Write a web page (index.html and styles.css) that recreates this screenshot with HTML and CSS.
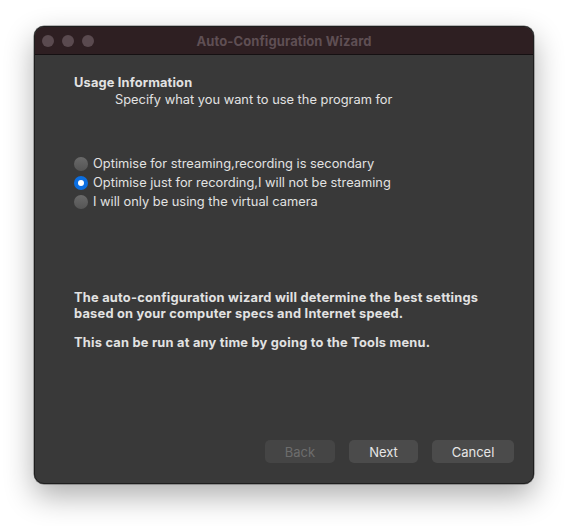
FILE: index.html
```html
<!DOCTYPE html>
<html>
<head>
<meta charset="utf-8">
<link rel="stylesheet" href="styles.css">
</head>
<body>
<div class="window">
  <div class="titlebar">
    <div class="lights"><span></span><span></span><span></span></div>
    <div class="title">Auto-Configuration Wizard</div>
  </div>
  <div class="content">
    <div class="heading">Usage Information</div>
    <div class="subheading">Specify what you want to use the program for</div>
    <div class="options">
      <label class="option"><span class="radio"></span>Optimise for streaming,recording is secondary</label>
      <label class="option"><span class="radio checked"></span>Optimise just for recording,I will not be streaming</label>
      <label class="option"><span class="radio"></span>I will only be using the virtual camera</label>
    </div>
    <p class="info first">The auto-configuration wizard will determine the best settings<br>based on your computer specs and Internet speed.</p>
    <p class="info second">This can be run at any time by going to the Tools menu.</p>
    <div class="buttons">
      <button class="btn back">Back</button>
      <button class="btn next">Next</button>
      <button class="btn cancel">Cancel</button>
    </div>
  </div>
</div>
</body>
</html>
```

FILE: styles.css
```css
html, body {
  margin: 0;
  padding: 0;
  background: #ffffff;
  min-height: 100vh;
}
body {
  font-family: "Inter", "Liberation Sans", sans-serif;
  font-size: 12.85px;
  padding: 26px 0 0 34px;
  box-sizing: border-box;
}
.window {
  width: 500px;
  height: 458px;
  box-sizing: border-box;
  border-radius: 10px;
  background: #393939;
  border: 1px solid #1e1e1e;
  box-shadow: 0 12px 30px rgba(0,0,0,0.32), 0 0 0 0.5px rgba(0,0,0,0.5);
  overflow: hidden;
  display: flex;
  flex-direction: column;
}
.titlebar {
  height: 27px;
  background: #2e1f22;
  border-bottom: 1px solid #151012;
  display: flex;
  align-items: center;
  position: relative;
  flex-shrink: 0;
}
.lights {
  display: flex;
  gap: 8px;
  padding-left: 7px;
}
.lights span {
  width: 12px;
  height: 12px;
  border-radius: 50%;
  background: #5a4a4f;
}
.title {
  position: absolute;
  left: 0;
  right: 0;
  text-align: center;
  color: #5f4f54;
  font-weight: 700;
  font-size: 13px;
  letter-spacing: 0.1px;
}
.content {
  flex: 1;
  padding: 20px 19px 20px 39px;
  display: flex;
  flex-direction: column;
  color: #e2e2e2;
}
.heading {
  font-weight: 700;
  line-height: 16px;
  letter-spacing: 0.15px;
}
.subheading {
  line-height: 16px;
  margin-top: 1px;
  padding-left: 41px;
}
.options {
  margin-top: 46px;
  display: flex;
  flex-direction: column;
}
.option {
  display: flex;
  align-items: center;
  height: 19px;
  gap: 5px;
}
.radio {
  width: 14px;
  height: 14px;
  border-radius: 50%;
  background: linear-gradient(#6a6a6a, #555555);
  box-sizing: border-box;
  position: relative;
  flex-shrink: 0;
}
.radio.checked {
  background: #0b6ee0;
}
.radio.checked::after {
  content: "";
  position: absolute;
  left: 4px;
  top: 4px;
  width: 6px;
  height: 6px;
  border-radius: 50%;
  background: #ffffff;
}
.info {
  margin: 0;
  font-weight: 700;
  line-height: 16px;
  letter-spacing: 0.22px;
}
.info.first {
  margin-top: 79px;
}
.info.second {
  margin-top: 13px;
}
.buttons {
  margin-top: auto;
  display: flex;
  justify-content: flex-end;
  gap: 14px;
}
.btn {
  font-family: inherit;
  font-size: 13px;
  height: 23px;
  border: none;
  border-radius: 5px;
  background: #4b4b4b;
  color: #e6e6e6;
  padding: 0;
}
.btn.back { width: 70px; color: #6d6d6d; background: #454545; }
.btn.next { width: 69px; }
.btn.cancel { width: 82px; }
```
